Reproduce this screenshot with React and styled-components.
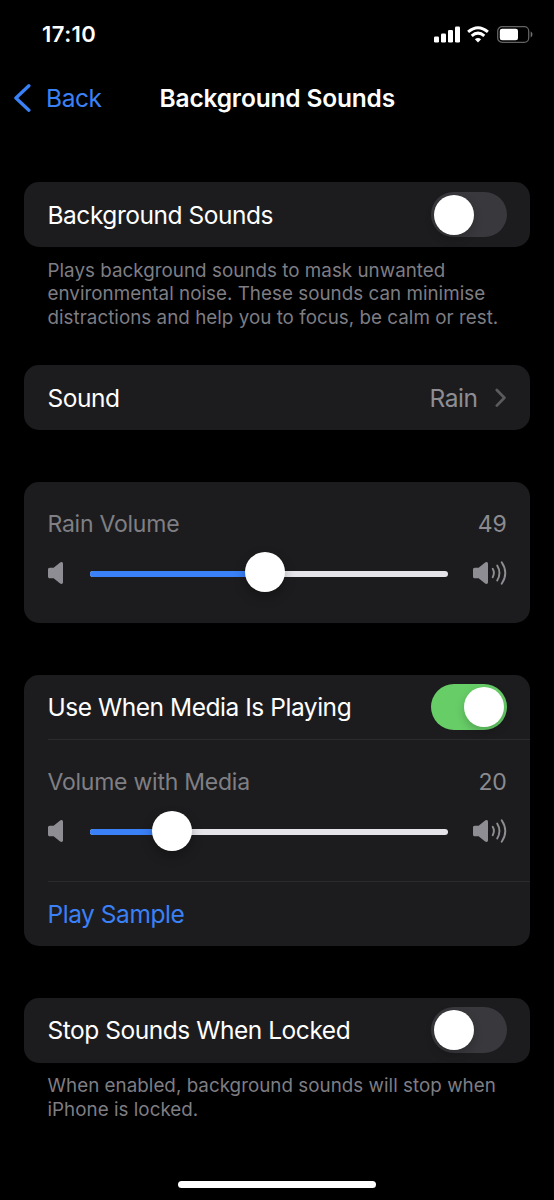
import React from 'react';
import styled, { createGlobalStyle } from 'styled-components';

const blue = '#3a80f6';

const GlobalStyle = createGlobalStyle`
  * { box-sizing: border-box; }
  html, body { margin: 0; background: #000; }
  body { font-family: Inter, "Liberation Sans", sans-serif; color: #fff; }
  svg { display: block; flex: none; }
`;

const Screen = styled.div`
  width: 554px;
  height: 1200px;
  background: #000;
  display: flex;
  flex-direction: column;
  overflow: hidden;
`;

const StatusBar = styled.header`
  height: 68px;
  display: flex;
  align-items: center;
  justify-content: space-between;
  padding: 0 21px 0 42px;
`;

const Clock = styled.time`
  font-size: 22px;
  font-weight: 600;
  line-height: 28px;
  letter-spacing: 0.45px;
`;

const StatusIcons = styled.div`
  display: flex;
  align-items: center;
  gap: 7px;
`;

const NavBar = styled.nav`
  height: 60px;
  display: grid;
  grid-template-columns: 159.5px 1fr;
  align-items: center;
`;

const BackButton = styled.button`
  display: flex;
  align-items: center;
  gap: 15px;
  padding: 0 0 0 13px;
  border: 0;
  background: none;
  font: inherit;
  font-size: 24.5px;
  line-height: 30px;
  letter-spacing: -0.4px;
  color: ${blue};
`;

const Title = styled.h1`
  margin: 0;
  font-size: 24.5px;
  font-weight: 600;
  line-height: 30px;
  letter-spacing: -0.17px;
`;

const Content = styled.main`
  flex: 1;
  padding: 54px 24px 0;
`;

const Group = styled.section`
  height: ${(p) => p.$height}px;
`;

const Card = styled.div`
  background: #1c1c1e;
  border-radius: 15px;
`;

const Row = styled.div`
  height: ${(p) => p.$height ?? 65}px;
  display: flex;
  align-items: center;
  justify-content: space-between;
  padding: 0 23.5px;
`;

const Label = styled.span`
  font-size: 24.5px;
  line-height: 30px;
  letter-spacing: -0.46px;
  color: ${(p) => p.$color ?? '#fff'};
  white-space: nowrap;
`;

const VolumeLabel = styled(Label)`
  font-size: 23px;
  line-height: 28px;
  letter-spacing: -0.24px;
`;

const Value = styled.span`
  display: flex;
  align-items: center;
  gap: 17px;
`;

const Footnote = styled.p`
  margin: 0;
  padding: 11.5px 0 0 23.5px;
  font-size: 18.8px;
  line-height: 23.6px;
  letter-spacing: 0.03px;
  color: #7e7d83;
  white-space: nowrap;
`;

const Divider = styled.div`
  height: 1px;
  margin-left: 23.5px;
  background: #2c2c2e;
`;

const Switch = styled.div`
  width: 75.5px;
  height: 45.5px;
  border-radius: 23px;
  padding: 2.5px 3px;
  display: flex;
  justify-content: ${(p) => (p.$on ? 'flex-end' : 'flex-start')};
  align-items: center;
  background: ${(p) => (p.$on ? '#67ce67' : '#39393d')};
`;

const Knob = styled.div`
  width: 40px;
  height: 40px;
  border-radius: 50%;
  background: #fff;
  box-shadow: 0 4px 10px rgba(0, 0, 0, 0.2);
`;

const VolumeBlock = styled.div`
  height: ${(p) => p.$height}px;
  padding: 28px 23.5px 0;
`;

const VolumeHead = styled.div`
  height: 30px;
  display: flex;
  justify-content: space-between;
`;

const VolumeControl = styled.div`
  height: 40px;
  margin-top: 13px;
  display: grid;
  grid-template-columns: 42.5px 358px 1fr;
  align-items: center;
`;

const Track = styled.div`
  height: 6px;
  margin-top: 2px;
  border-radius: 3px;
  background: #e5e4e8;
  display: flex;
  align-items: center;
`;

const Fill = styled.div`
  height: 6px;
  border-radius: 3px 0 0 3px;
  background: ${blue};
`;

const SliderKnob = styled(Knob)`
  flex: none;
  margin: -3px 0 0 -20px;
  box-shadow: 0 5px 12px rgba(0, 0, 0, 0.28);
`;

const LoudSlot = styled.span`
  justify-self: end;
`;

const HomeIndicator = styled.div`
  width: 198px;
  height: 7px;
  margin: 0 auto 12px;
  border-radius: 4px;
  background: #fff;
`;

const speakerPath =
  'M1.8 5.8H5.6L11.8 0.7C13.3 -0.4 15 0.1 15 1.8V20.2C15 21.9 13.3 22.4 11.8 21.3L5.6 16.2H1.8C0.6 16.2 0 15.5 0 14.4V7.6C0 6.5 0.6 5.8 1.8 5.8Z';

const Quiet = () => (
  <svg width="15" height="22" viewBox="0 0 15 22" fill="#8e8d93">
    <path d={speakerPath} />
  </svg>
);

const Loud = () => (
  <svg width="34" height="24" viewBox="0 0 34 24" fill="none">
    <path d={speakerPath} transform="translate(0 1)" fill="#8e8d93" />
    <g stroke="#8e8d93" strokeWidth="1.9" strokeLinecap="round">
      <path d="M19.7 7.8Q22.1 12 19.7 16.2" />
      <path d="M24.2 4.5Q28.7 12 24.2 19.5" />
      <path d="M28.7 1.2Q35.9 12 28.7 22.8" />
    </g>
  </svg>
);

const Signal = () => (
  <svg width="26" height="17" viewBox="0 0 26 17" fill="#fff">
    <rect x="0" y="10.5" width="5" height="6" rx="1.3" />
    <rect x="7" y="7.5" width="5" height="9" rx="1.3" />
    <rect x="14" y="4" width="5" height="12.5" rx="1.3" />
    <rect x="21" y="0.5" width="5" height="16" rx="1.3" />
  </svg>
);

const Wifi = () => (
  <svg width="22" height="17" viewBox="0 0 22 17" fill="none" stroke="#fff" strokeWidth="3">
    <path d="M1.1 5.9Q11 -2.5 20.9 5.9" />
    <path d="M4.7 9.8Q11 4.4 17.3 9.8" />
    <path d="M11 16.5L7.9 13.3Q11 10.7 14.1 13.3Z" fill="#fff" stroke="none" />
  </svg>
);

const Battery = () => (
  <svg width="37" height="17" viewBox="0 0 37 17">
    <rect x="1.7" y="0.7" width="31" height="15.6" rx="4.4" fill="none" stroke="#636363" strokeWidth="1.3" />
    <rect x="3.8" y="2.8" width="18.2" height="11.4" rx="2.3" fill="#fff" />
    <path d="M34.7 5.6C37 6.5 37 10.5 34.7 11.4Z" fill="#707070" />
  </svg>
);

const BackChevron = () => (
  <svg width="18" height="28" viewBox="0 0 18 28" fill="none" stroke={blue} strokeWidth="3.3" strokeLinecap="round" strokeLinejoin="round">
    <path d="M15.9 1.8L2.9 14L15.9 26.2" />
  </svg>
);

const RowChevron = () => (
  <svg width="12" height="20" viewBox="0 0 12 20" fill="none" stroke="#5b5b5f" strokeWidth="2.7" strokeLinecap="round" strokeLinejoin="round">
    <path d="M1.8 2L9.4 9.8L1.8 17.6" />
  </svg>
);

const Toggle = ({ on }) => (
  <Switch $on={on} role="switch" aria-checked={!!on}>
    <Knob />
  </Switch>
);

const Volume = ({ label, value, percent, height = 141 }) => (
  <VolumeBlock $height={height}>
    <VolumeHead>
      <VolumeLabel $color="#7f7f84">{label}</VolumeLabel>
      <VolumeLabel $color="#8b8b90">{value}</VolumeLabel>
    </VolumeHead>
    <VolumeControl>
      <Quiet />
      <Track>
        <Fill style={{ width: `${percent}%` }} />
        <SliderKnob />
      </Track>
      <LoudSlot><Loud /></LoudSlot>
    </VolumeControl>
  </VolumeBlock>
);

export default function App() {
  return (
    <Screen>
      <GlobalStyle />
      <StatusBar>
        <Clock>17:10</Clock>
        <StatusIcons>
          <Signal />
          <Wifi />
          <Battery />
        </StatusIcons>
      </StatusBar>
      <NavBar>
        <BackButton><BackChevron />Back</BackButton>
        <Title>Background Sounds</Title>
      </NavBar>
      <Content>
        <Group $height={183}>
          <Card>
            <Row><Label>Background Sounds</Label><Toggle /></Row>
          </Card>
          <Footnote>
            Plays background sounds to mask unwanted<br />
            environmental noise. These sounds can minimise<br />
            distractions and help you to focus, be calm or rest.
          </Footnote>
        </Group>
        <Group $height={116.5}>
          <Card>
            <Row>
              <Label>Sound</Label>
              <Value><Label $color="#8e8d93">Rain</Label><RowChevron /></Value>
            </Row>
          </Card>
        </Group>
        <Group $height={193}>
          <Card>
            <Volume label="Rain Volume" value={49} percent={49} />
          </Card>
        </Group>
        <Group $height={323}>
          <Card>
            <Row $height={64.5}><Label>Use When Media Is Playing</Label><Toggle on /></Row>
            <Divider />
            <Volume label="Volume with Media" value={20} percent={23} height={140.5} />
            <Divider />
            <Row $height={64}><Label $color={blue}>Play Sample</Label></Row>
          </Card>
        </Group>
        <Group $height={150}>
          <Card>
            <Row><Label>Stop Sounds When Locked</Label><Toggle /></Row>
          </Card>
          <Footnote>
            When enabled, background sounds will stop when<br />
            iPhone is locked.
          </Footnote>
        </Group>
      </Content>
      <HomeIndicator />
    </Screen>
  );
}
